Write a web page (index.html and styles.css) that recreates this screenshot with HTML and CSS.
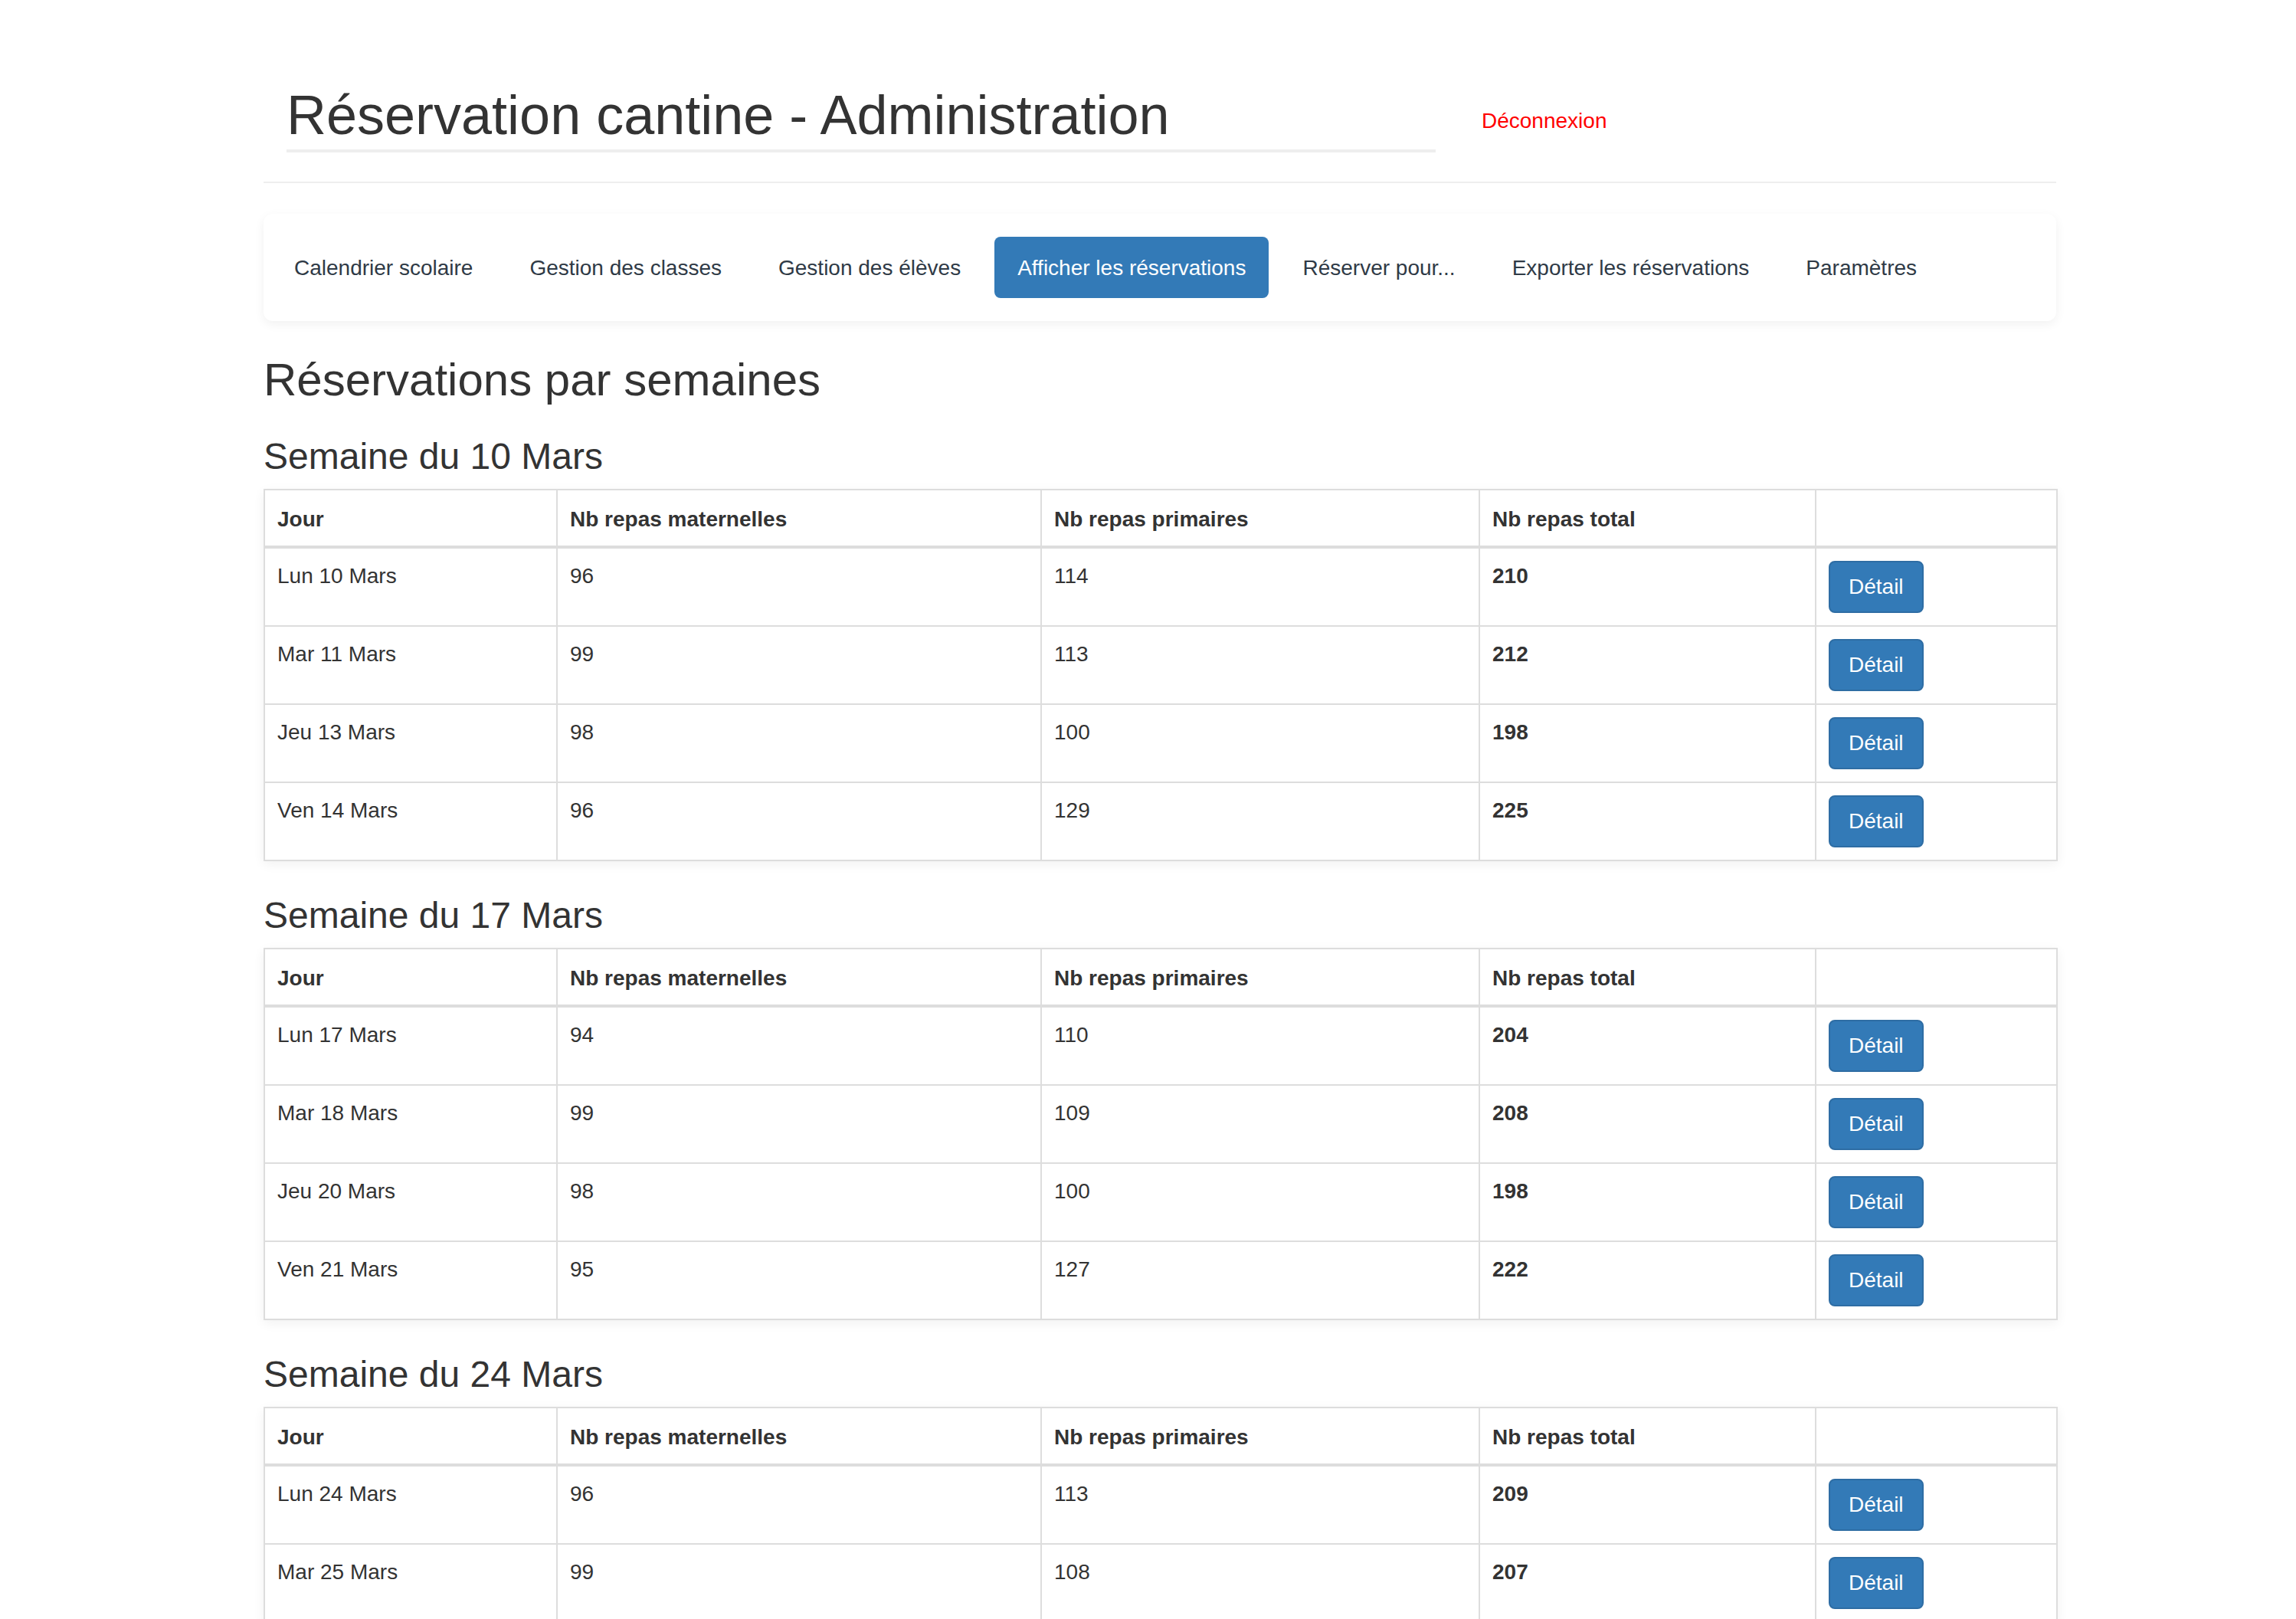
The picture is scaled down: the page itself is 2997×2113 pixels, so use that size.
FILE: index.html
```html
<!DOCTYPE html>
<html lang="fr">
<head>
<meta charset="utf-8">
<title>Réservation cantine - Administration</title>
<link rel="stylesheet" href="styles.css">
</head>
<body>
<div class="container">
  <header class="header">
    <div class="title-col"><h1>Réservation cantine - Administration</h1></div>
    <div class="logout-col"><a class="logout" href="#">Déconnexion</a></div>
  </header>
  <hr class="sep">
  <nav class="navbar">
    <a class="pill" href="#">Calendrier scolaire</a>
    <a class="pill" href="#">Gestion des classes</a>
    <a class="pill" href="#">Gestion des élèves</a>
    <a class="pill active" href="#">Afficher les réservations</a>
    <a class="pill" href="#">Réserver pour...</a>
    <a class="pill" href="#">Exporter les réservations</a>
    <a class="pill" href="#">Paramètres</a>
  </nav>

  <h2 class="page-title">Réservations par semaines</h2>

  <h3 class="week">Semaine du 10 Mars</h3>
  <table class="tbl">
    <colgroup><col class="c1"><col class="c2"><col class="c3"><col class="c4"><col class="c5"></colgroup>
    <thead><tr><th>Jour</th><th>Nb repas maternelles</th><th>Nb repas primaires</th><th>Nb repas total</th><th></th></tr></thead>
    <tbody>
      <tr><td>Lun 10 Mars</td><td>96</td><td>114</td><td class="b">210</td><td><a class="btn" href="#">Détail</a></td></tr>
      <tr><td>Mar 11 Mars</td><td>99</td><td>113</td><td class="b">212</td><td><a class="btn" href="#">Détail</a></td></tr>
      <tr><td>Jeu 13 Mars</td><td>98</td><td>100</td><td class="b">198</td><td><a class="btn" href="#">Détail</a></td></tr>
      <tr><td>Ven 14 Mars</td><td>96</td><td>129</td><td class="b">225</td><td><a class="btn" href="#">Détail</a></td></tr>
    </tbody>
  </table>

  <h3 class="week">Semaine du 17 Mars</h3>
  <table class="tbl">
    <colgroup><col class="c1"><col class="c2"><col class="c3"><col class="c4"><col class="c5"></colgroup>
    <thead><tr><th>Jour</th><th>Nb repas maternelles</th><th>Nb repas primaires</th><th>Nb repas total</th><th></th></tr></thead>
    <tbody>
      <tr><td>Lun 17 Mars</td><td>94</td><td>110</td><td class="b">204</td><td><a class="btn" href="#">Détail</a></td></tr>
      <tr><td>Mar 18 Mars</td><td>99</td><td>109</td><td class="b">208</td><td><a class="btn" href="#">Détail</a></td></tr>
      <tr><td>Jeu 20 Mars</td><td>98</td><td>100</td><td class="b">198</td><td><a class="btn" href="#">Détail</a></td></tr>
      <tr><td>Ven 21 Mars</td><td>95</td><td>127</td><td class="b">222</td><td><a class="btn" href="#">Détail</a></td></tr>
    </tbody>
  </table>

  <h3 class="week">Semaine du 24 Mars</h3>
  <table class="tbl">
    <colgroup><col class="c1"><col class="c2"><col class="c3"><col class="c4"><col class="c5"></colgroup>
    <thead><tr><th>Jour</th><th>Nb repas maternelles</th><th>Nb repas primaires</th><th>Nb repas total</th><th></th></tr></thead>
    <tbody>
      <tr><td>Lun 24 Mars</td><td>96</td><td>113</td><td class="b">209</td><td><a class="btn" href="#">Détail</a></td></tr>
      <tr><td>Mar 25 Mars</td><td>99</td><td>108</td><td class="b">207</td><td><a class="btn" href="#">Détail</a></td></tr>
    </tbody>
  </table>
</div>
</body>
</html>
```

FILE: styles.css
```css
html, body {
  margin: 0;
  padding: 0;
  background: #fff;
}
body {
  font-family: "Liberation Sans", Arial, sans-serif;
  font-size: 28px;
  line-height: 40px;
  color: #333;
}
.container {
  width: 2340px;
  margin-left: 344px;
  padding-top: 110px;
}
.header {
  display: flex;
}
.title-col {
  width: 1560px;
  box-sizing: border-box;
  padding: 0 30px;
}
.title-col h1 {
  margin: 0;
  font-size: 72px;
  line-height: 80px;
  font-weight: normal;
  padding-bottom: 5px;
  border-bottom: 4px solid #eee;
}
.logout-col {
  padding: 28px 30px 0;
}
.logout {
  color: #f00;
  text-decoration: none;
}
.sep {
  margin: 38px 0 40px;
  border: 0;
  border-top: 2px solid #eee;
  height: 0;
}
.navbar {
  display: flex;
  gap: 14px;
  padding: 30px 10px;
  background: #fff;
  border-radius: 12px;
  box-shadow: 0 4px 14px rgba(0, 0, 0, 0.06);
  margin-bottom: 44px;
}
.pill {
  display: block;
  padding: 21px 30px 19px;
  border-radius: 8px;
  color: #2f3a46;
  text-decoration: none;
}
.pill.active {
  background: #337ab7;
  color: #fff;
}
.page-title {
  margin: 0 0 18px;
  font-size: 60px;
  line-height: 66px;
  font-weight: normal;
}
.week {
  margin: 44px 0 16px;
  font-size: 48px;
  line-height: 53px;
  font-weight: normal;
}
.page-title + .week {
  margin-top: 40px;
}
.tbl {
  width: 2340px;
  table-layout: fixed;
  border-collapse: collapse;
  border: 2px solid #ddd;
  margin-bottom: 44px;
  box-shadow: 0 4px 14px rgba(0, 0, 0, 0.06);
}
.c1 { width: 382px; }
.c2 { width: 632px; }
.c3 { width: 572px; }
.c4 { width: 439px; }
.c5 { width: 315px; }
.tbl th, .tbl td {
  border: 2px solid #ddd;
  padding: 16px;
  text-align: left;
  vertical-align: top;
  line-height: 40px;
}
.tbl th {
  font-weight: bold;
  padding-top: 18px;
  padding-bottom: 14px;
  border-bottom-width: 4px;
  vertical-align: bottom;
}
.tbl td.b {
  font-weight: bold;
}
.btn {
  display: inline-block;
  padding: 12px 24px;
  line-height: 40px;
  border: 2px solid #2e6da4;
  border-radius: 8px;
  background: #337ab7;
  color: #fff;
  text-decoration: none;
}
```
